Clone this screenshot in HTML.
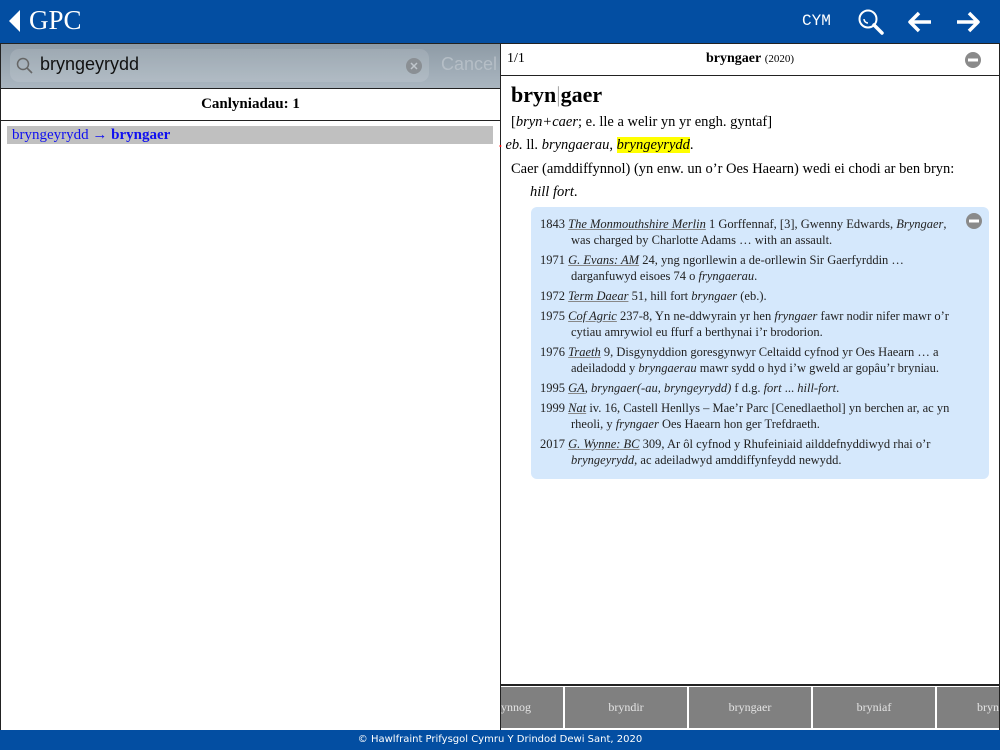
<!DOCTYPE html>
<html><head><meta charset="utf-8"><style>
*{margin:0;padding:0;box-sizing:border-box}
body{width:1000px;height:750px;overflow:hidden;background:#fff;font-family:"Liberation Serif",serif;position:relative}
.hdr{position:absolute;left:0;top:0;width:1000px;height:44px;background:#034ea2;color:#fff}
.ftr{position:absolute;left:0;top:730px;width:1000px;height:20px;background:#034ea2;color:#fff;font:10px "DejaVu Sans",sans-serif;text-align:center;line-height:19px}
.left{position:absolute;left:0;top:43px;width:501px;height:688px;border:1px solid #222}
.right{position:absolute;left:500px;top:43px;width:500px;height:688px;border:1px solid #222}
.srch{position:absolute;left:0;top:0;width:499px;height:44px;background:linear-gradient(#8e9ba6,#aab6c0)}
.sbox{position:absolute;left:9px;top:5px;width:419px;height:33px;background:rgba(255,255,255,0.12);border-radius:9px}
.cit p{margin:0 0 4px 0;padding-left:31px;text-indent:-31px;line-height:16px}
.cit u{text-decoration:underline;text-decoration-color:#888}
.tab{position:absolute;top:643px;height:41px;background:#808080;color:#e4e4e4;font-size:12px;text-align:center;line-height:41px}
</style></head><body>
<div class="hdr">
<svg style="position:absolute;left:8px;top:10px" width="14" height="22"><polygon points="12,0 12,22 1,11" fill="#fff"/></svg>
<div style="position:absolute;left:29px;top:5px;font-size:27px;color:#fff">GPC</div>
<div style="position:absolute;left:802px;top:12px;font:16px 'Liberation Mono',monospace">CYM</div>
<svg style="position:absolute;left:857px;top:8px" width="28" height="28"><circle cx="11" cy="11" r="8.5" stroke="#fff" stroke-width="2" fill="none"/><path d="M7 11a4 4 0 0 0 4 4" stroke="#fff" stroke-width="1.5" fill="none"/><line x1="17" y1="17" x2="25" y2="25" stroke="#fff" stroke-width="3.5" stroke-linecap="round"/></svg>
<svg style="position:absolute;left:906px;top:10px" width="28" height="24"><path d="M25 12H4M13 3L4 12l9 9" stroke="#fff" stroke-width="3.5" fill="none" stroke-linejoin="round"/></svg>
<svg style="position:absolute;left:954px;top:10px" width="28" height="24"><path d="M3 12h21M15 3l9 9-9 9" stroke="#fff" stroke-width="3.5" fill="none" stroke-linejoin="round"/></svg>
</div>
<div class="left">
<div class="srch"><div class="sbox"></div>
<svg style="position:absolute;left:15px;top:13px" width="18" height="18"><circle cx="7" cy="7" r="5.5" stroke="#666" stroke-width="1.5" fill="none"/><line x1="11" y1="11" x2="16" y2="16" stroke="#666" stroke-width="1.6"/></svg>
<div style="position:absolute;left:39px;top:10px;font:18px 'Liberation Sans',sans-serif;color:#111">bryngeyrydd</div>
<svg style="position:absolute;left:404px;top:13px" width="18" height="18"><circle cx="9" cy="9" r="8" fill="#8a8f94"/><path d="M6 6l6 6M12 6l-6 6" stroke="#c0c6cc" stroke-width="1.5"/></svg>
<div style="position:absolute;left:440px;top:10px;font:18px 'Liberation Sans',sans-serif;color:#b5bec6">Cancel</div>
</div>
<div style="position:absolute;left:0;top:44px;width:499px;height:33px;border-top:1px solid #222;border-bottom:1px solid #222;text-align:center;font-weight:bold;font-size:15px;line-height:31px">Canlyniadau: 1</div>
<div style="position:absolute;left:6px;top:82px;width:486px;height:18px;background:#c0c0c0;color:#1010f0;font-size:15px;line-height:18px;padding-left:5px">bryngeyrydd → <b>bryngaer</b></div>
</div>
<div class="right">
<div style="position:absolute;left:0;top:0;width:498px;height:32px;border-bottom:1px solid #222">
<div style="position:absolute;left:6px;top:7px;font-size:14px">1/1</div>
<div style="position:absolute;left:0;width:498px;top:7px;text-align:center;font-size:14px"><b>bryngaer</b> <span style="font-size:11px">(2020)</span></div>
<svg style="position:absolute;left:463px;top:7px" width="18" height="18"><circle cx="9" cy="9" r="8" fill="#8a8a8a"/><rect x="4" y="7.5" width="10" height="3" fill="#fff"/></svg>
</div>
<div style="position:absolute;left:10px;top:38px;font-size:22px;font-weight:bold">bryn<span style="color:#aaa;font-weight:normal">|</span>gaer</div>
<div style="position:absolute;left:10px;top:70px;font-size:14.5px">[<i>bryn+caer</i>; e. lle a welir yn yr engh. gyntaf]</div>
<div style="position:absolute;left:-2px;top:93px;font-size:14.5px"><span style="color:red;font-size:8px">•</span> <i>eb.</i> ll. <i>bryngaerau</i>, <i style="background:#ff0">bryngeyrydd</i>.</div>
<div style="position:absolute;left:10px;top:117px;font-size:14.5px">Caer (amddiffynnol) (yn enw. un o’r Oes Haearn) wedi ei chodi ar ben bryn:</div>
<div style="position:absolute;left:29px;top:140px;font-size:14.5px"><i>hill fort</i>.</div>
<div class="cit" style="position:absolute;left:30px;top:163px;width:458px;height:272px;background:#d5e8fc;border-radius:6px;padding:9px 35px 0 9px;font-size:12.5px;color:#222">
<svg style="position:absolute;left:434px;top:5px" width="18" height="18"><circle cx="9" cy="9" r="8" fill="#8a8a8a"/><rect x="4" y="7.5" width="10" height="3" fill="#fff"/></svg>
<p>1843 <u><i>The Monmouthshire Merlin</i></u> 1 Gorffennaf, [3], Gwenny Edwards, <i>Bryngaer</i>, was charged by Charlotte Adams … with an assault.</p>
<p>1971 <u><i>G. Evans: AM</i></u> 24, yng ngorllewin a de-orllewin Sir Gaerfyrddin … darganfuwyd eisoes 74 o <i>fryngaerau</i>.</p>
<p>1972 <u><i>Term Daear</i></u> 51, hill fort <i>bryngaer</i> (eb.).</p>
<p>1975 <u><i>Cof Agric</i></u> 237-8, Yn ne-ddwyrain yr hen <i>fryngaer</i> fawr nodir nifer mawr o’r cytiau amrywiol eu ffurf a berthynai i’r brodorion.</p>
<p>1976 <u><i>Traeth</i></u> 9, Disgynyddion goresgynwyr Celtaidd cyfnod yr Oes Haearn … a adeiladodd y <i>bryngaerau</i> mawr sydd o hyd i’w gweld ar gopâu’r bryniau.</p>
<p>1995 <u><i>GA</i></u>, <i>bryngaer(-au, bryngeyrydd)</i> f d.g. <i>fort</i> ... <i>hill-fort</i>.</p>
<p>1999 <u><i>Nat</i></u> iv. 16, Castell Henllys – Mae’r Parc [Cenedlaethol] yn berchen ar, ac yn rheoli, y <i>fryngaer</i> Oes Haearn hon ger Trefdraeth.</p>
<p>2017 <u><i>G. Wynne: BC</i></u> 309, Ar ôl cyfnod y Rhufeiniaid ailddefnyddiwyd rhai o’r <i>bryngeyrydd</i>, ac adeiladwyd amddiffynfeydd newydd.</p>
</div>
<div style="position:absolute;left:0;top:640px;width:498px;height:2px;background:#222"></div>
<div class="tab" style="left:0;width:62px;text-align:left">ynnog</div>
<div class="tab" style="left:64px;width:122px">bryndir</div>
<div class="tab" style="left:188px;width:122px">bryngaer</div>
<div class="tab" style="left:312px;width:122px">bryniaf</div>
<div class="tab" style="left:436px;width:62px;text-align:right;padding-right:0">bryn</div>
</div>
<div class="ftr">© Hawlfraint Prifysgol Cymru Y Drindod Dewi Sant, 2020</div>
</body></html>
